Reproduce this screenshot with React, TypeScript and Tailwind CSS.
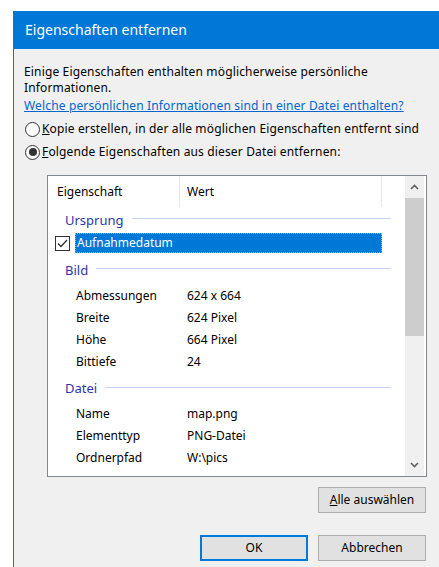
import type { ReactNode } from 'react';

// Property rows grouped by section
const GROUPS: { title: string; rows: [string, string][] }[] = [
  {
    title: 'Bild',
    rows: [
      ['Abmessungen', '624 x 664'],
      ['Breite', '624 Pixel'],
      ['Höhe', '664 Pixel'],
      ['Bittiefe', '24'],
    ],
  },
  {
    title: 'Datei',
    rows: [
      ['Name', 'map.png'],
      ['Elementtyp', 'PNG-Datei'],
      ['Ordnerpfad', 'W:\\pics'],
    ],
  },
];

function Radio({ checked, children }: { checked?: boolean; children: ReactNode }) {
  return (
    <div className="flex items-center h-[20px]">
      <span className="w-[15px] h-[15px] ml-[1px] mr-[2px] rounded-full border border-[#333] bg-white flex items-center justify-center shrink-0">
        {checked && <span className="w-[8px] h-[8px] rounded-full bg-[#333]" />}
      </span>
      <span>{children}</span>
    </div>
  );
}

function GroupHeader({ title, className }: { title: string; className: string }) {
  return (
    <div className={`flex items-center pl-[17px] pr-[14px] ${className}`}>
      <span className="text-[13px] text-[#2e36a8]">{title}</span>
      <span className="flex-1 h-px bg-[#c6d2f2] ml-[8px] -mt-[2px]" />
    </div>
  );
}

function Row({ label, value }: { label: string; value: string }) {
  return (
    <div className="flex items-center h-[22px]">
      <span className="w-[132px] pl-[28px] shrink-0">{label}</span>
      <span className="pl-[7px]">{value}</span>
    </div>
  );
}

function Chevron({ down }: { down?: boolean }) {
  return (
    <svg width="9" height="6" viewBox="0 0 9 6" className={down ? 'rotate-180' : ''}>
      <path d="M1 5 L4.5 1.5 L8 5" fill="none" stroke="#606060" strokeWidth="1.6" />
    </svg>
  );
}

function Button({ children, focused }: { children: ReactNode; focused?: boolean }) {
  return (
    <button
      className={`w-[108px] h-[26px] flex items-center justify-center bg-[#e1e1e1] ${
        focused ? 'border-2 border-[#0078d7]' : 'border border-[#adadad]'
      }`}
    >
      {children}
    </button>
  );
}

export default function App() {
  return (
    <div className="w-[439px] h-[567px] bg-white pt-[11px] pl-[13px] overflow-hidden font-['Noto_Sans','Liberation_Sans',sans-serif] text-[12px] leading-[16px] text-black">
      <div className="h-full flex flex-col border-l border-[#0078d7]">
        {/* Title bar */}
        <div className="h-[38px] shrink-0 bg-[#0078d7] flex items-center pl-[11px] text-white text-[14px]">
          Eigenschaften entfernen
        </div>

        {/* Dialog body */}
        <div className="flex-1 bg-[#f0f0f0] pl-[10px] pt-[15px]">
          <div className="tracking-[0.15px]">
            <p>
              Einige Eigenschaften enthalten möglicherweise persönliche
              <br />
              Informationen.
            </p>
            <p className="mt-[2px] text-[#0066cc] underline">
              Welche persönlichen Informationen sind in einer Datei enthalten?
            </p>

            <div className="mt-[5px]">
              <Radio>
                <u>K</u>opie erstellen, in der alle möglichen Eigenschaften entfernt sind
              </Radio>
            </div>
            <div className="mt-[3px]">
              <Radio checked>
                <u>F</u>olgende Eigenschaften aus dieser Datei entfernen:
              </Radio>
            </div>
          </div>

          {/* Property list */}
          <div className="mt-[13px] ml-[23px] w-[380px] h-[302px] border border-[#828790] bg-white flex">
            <div className="flex-1 flex flex-col min-w-0">
              <div className="h-[31px] flex shrink-0">
                <div className="w-[132px] pl-[9px] flex items-center border-r border-[#e5e5e5]">Eigenschaft</div>
                <div className="w-[202px] pl-[7px] flex items-center border-r border-[#e5e5e5]">Wert</div>
              </div>

              <GroupHeader title="Ursprung" className="h-[25px]" />
              <div className="h-[22px] flex items-center">
                <span className="w-[15px] h-[15px] ml-[7px] border border-[#333] bg-white flex items-center justify-center shrink-0">
                  <svg width="11" height="9" viewBox="0 0 11 9">
                    <path d="M1 4.5 L4 7.5 L10 1" fill="none" stroke="#333" strokeWidth="1.3" />
                  </svg>
                </span>
                <span className="ml-[5px] w-[307px] h-[20px] bg-[#0078d7] text-white pl-[2px] flex items-center outline outline-1 outline-dotted outline-[#e8a050] -outline-offset-1">
                  Aufnahmedatum
                </span>
              </div>

              <GroupHeader title={GROUPS[0].title} className="h-[31px]" />
              {GROUPS[0].rows.map(([l, v]) => (
                <Row key={l} label={l} value={v} />
              ))}
              <GroupHeader title={GROUPS[1].title} className="h-[30px]" />
              {GROUPS[1].rows.map(([l, v]) => (
                <Row key={l} label={l} value={v} />
              ))}
            </div>

            {/* Vertical scrollbar */}
            <div className="w-[19px] mr-[2px] bg-[#f0f0f0] flex flex-col shrink-0">
              <div className="h-[22px] flex items-center justify-center">
                <Chevron />
              </div>
              <div className="h-[138px] bg-[#cdcdcd]" />
              <div className="flex-1" />
              <div className="h-[22px] flex items-center justify-center">
                <Chevron down />
              </div>
            </div>
          </div>

          <div className="mt-[10px] ml-[23px] w-[379px] flex justify-end">
            <Button>
              <u>A</u>lle auswählen
            </Button>
          </div>

          <div className="mt-[22px] ml-[23px] w-[379px] flex justify-end gap-[10px]">
            <Button focused>OK</Button>
            <Button>Abbrechen</Button>
          </div>
        </div>
      </div>
    </div>
  );
}
